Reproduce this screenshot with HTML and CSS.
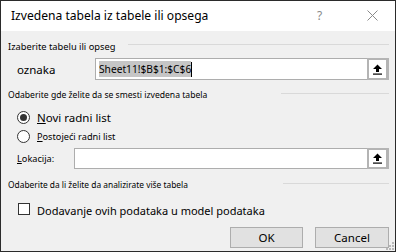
FILE: index.html
```html
<!DOCTYPE html>
<html>
<head>
<meta charset="utf-8">
<link rel="stylesheet" href="styles.css">
</head>
<body>
<div class="dialog">
  <div class="titlebar">
    <span class="title">Izvedena tabela iz tabele ili opsega</span>
    <span class="help">?</span>
    <svg class="close" width="11" height="11" viewBox="0 0 11 11"><path d="M0.5 0.5L10.5 10.5M10.5 0.5L0.5 10.5" stroke="#8a8a8a" stroke-width="1" fill="none"/></svg>
  </div>
  <div class="content">
    <div class="legend l1"><span>Izaberite tabelu ili opseg</span><div class="rule"></div></div>
    <div class="row r-table">
      <span class="lbl big">oznaka</span>
      <div class="input w1">
        <div class="field"><span class="sel">Sheet11!$B$1:$C$6</span><span class="caret"></span></div>
        <div class="pick"><div class="pick-in">
          <svg width="11" height="11" viewBox="0 0 11 11"><path d="M5.5 0.5L10 5H7V8H4V5H1Z" fill="#000"/><rect x="1" y="9.5" width="9" height="1.2" fill="#000"/></svg>
        </div></div>
      </div>
    </div>
    <div class="legend l2"><span>Odaberite gde želite da se smesti izvedena tabela</span><div class="rule"></div></div>
    <div class="radio r1"><span class="dot on"></span><span class="big"><u>N</u>ovi radni list</span></div>
    <div class="radio r2"><span class="dot"></span><span class="small"><u>P</u>ostojeći radni list</span></div>
    <div class="row r-loc">
      <span class="lbl small"><u>L</u>okacija:</span>
      <div class="input w2">
        <div class="field"></div>
        <div class="pick"><div class="pick-in">
          <svg width="11" height="11" viewBox="0 0 11 11"><path d="M5.5 0.5L10 5H7V8H4V5H1Z" fill="#000"/><rect x="1" y="9.5" width="9" height="1.2" fill="#000"/></svg>
        </div></div>
      </div>
    </div>
    <div class="legend l3"><span>Odaberite da li želite da analizirate više tabela</span><div class="rule"></div></div>
    <div class="check"><span class="box"></span><span class="ctext">Dodavanje ovih podataka u model podataka</span></div>
    <div class="buttons">
      <div class="btn ok">OK</div>
      <div class="btn cancel">Cancel</div>
    </div>
  </div>
  <svg class="grip" width="10" height="10" viewBox="0 0 10 10">
    <rect x="7" y="1" width="2" height="2" fill="#b8b8b8"/>
    <rect x="4" y="4" width="2" height="2" fill="#b8b8b8"/>
    <rect x="7" y="4" width="2" height="2" fill="#b8b8b8"/>
    <rect x="1" y="7" width="2" height="2" fill="#b8b8b8"/>
    <rect x="4" y="7" width="2" height="2" fill="#b8b8b8"/>
    <rect x="7" y="7" width="2" height="2" fill="#b8b8b8"/>
  </svg>
</div>
</body>
</html>
```

FILE: styles.css
```css
* { box-sizing: border-box; }
html, body { margin: 0; padding: 0; }
body { width: 396px; height: 252px; overflow: hidden; font-family: "Noto Sans", "Open Sans", sans-serif; color: #000; }
.dialog { position: relative; width: 396px; height: 252px; border: 1px solid #2b2b2b; background: #f0f0f0; }
.titlebar { height: 30px; background: #fff; display: flex; align-items: center; padding-left: 10px; }
.title { font-size: 12.1px; flex: 1; margin-top: -1px; }
.help { font-size: 12px; color: #8a8a8a; width: 50px; text-align: left; margin-top: -2px; }
.close { margin-right: 17px; margin-top: -2px; }
.content { padding: 0 6px 0 7px; }
.legend { display: flex; align-items: flex-start; height: 12px; font-size: 8.6px; line-height: 12px; white-space: nowrap; }
.legend span { flex: none; }
.legend .rule { flex: 1; height: 1px; background: #d9d9d9; margin-top: 4px; }
.l1 { margin-top: 10px; }
.l1 span { font-size: 9.3px; width: 120px; }
.l1 .rule { margin-top: 3px; }
.l2 { margin-top: 9px; }
.l2 span { width: 273px; }
.l3 { margin-top: 10px; }
.l3 span { width: 275px; font-size: 8.4px; }
.row { display: flex; align-items: center; }
.r-table { margin-top: 5px; height: 22px; }
.r-loc { margin-top: 2px; height: 21px; }
.lbl { padding-left: 9px; }
.r-table .lbl { width: 87px; }
.r-loc .lbl { width: 66px; }
.big { font-size: 11.5px; }
.ctext { font-size: 11px; line-height: 18px; }
.small { font-size: 9.2px; }
.input { flex: 1; height: 100%; display: flex; border: 1px solid #adadad; background: #fff; }
.field { flex: 1; display: flex; align-items: center; padding-left: 3px; font-size: 10.2px; }
.sel { background: #c6c6c6; line-height: 16px; }
.caret { width: 1px; height: 15px; background: #000; }
.pick { width: 22px; margin: -1px -1px -1px 0; background: #b4b4b4; padding: 2px 3px 2px 2px; }
.pick-in { width: 100%; height: 100%; background: #fff; display: flex; align-items: center; justify-content: center; }
.radio { display: flex; align-items: center; height: 19px; padding-left: 9px; }
.r1 { margin-top: 7px; }
.dot { width: 13px; height: 13px; border: 1px solid #333; border-radius: 50%; background: #fff; margin-right: 7px; position: relative; flex: none; }
.dot.on::after { content: ""; position: absolute; left: 2px; top: 2px; width: 7px; height: 7px; border-radius: 50%; background: #333; }
.check { display: flex; align-items: flex-start; margin-top: 11px; padding-left: 10px; }
.box { width: 12px; height: 12px; border: 1px solid #333; background: #fff; margin-right: 7px; margin-top: 1px; flex: none; }
.buttons { display: flex; justify-content: flex-end; gap: 12px; margin-top: 7px; }
.btn { height: 21px; border: 1px solid #adadad; background: #e1e1e1; font-size: 11.5px; display: flex; align-items: center; justify-content: center; }
.ok { width: 73px; }
.cancel { width: 74px; }
.grip { position: absolute; right: 0; bottom: 0; }
```
